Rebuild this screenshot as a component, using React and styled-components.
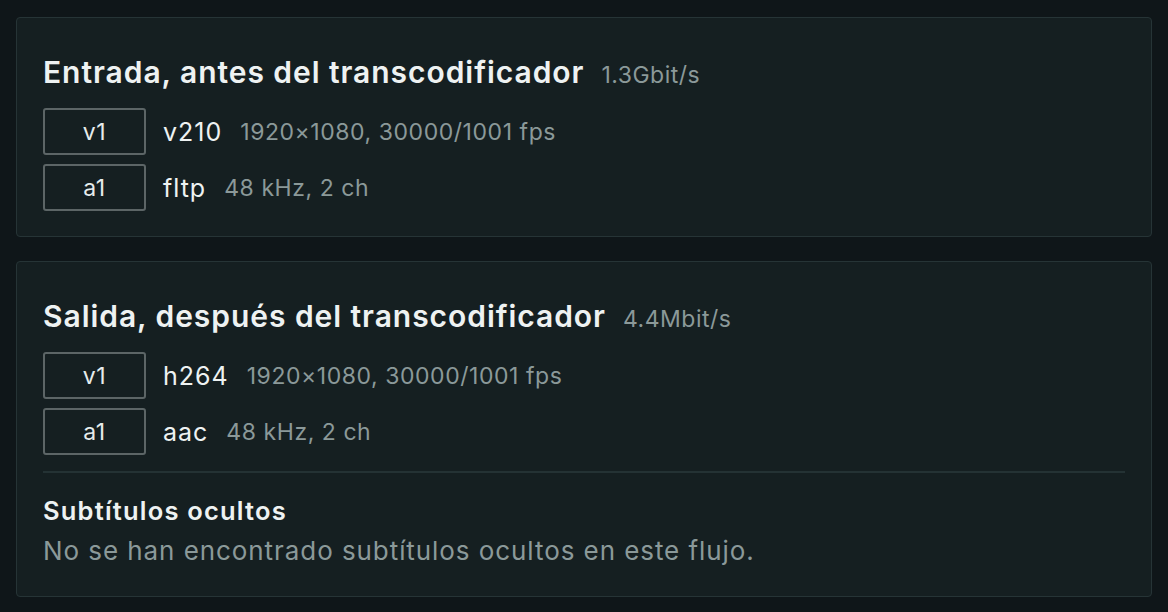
import styled, { createGlobalStyle } from 'styled-components'

const GlobalStyle = createGlobalStyle`
  html, body {
    margin: 0;
    padding: 0;
    background: #0f1619;
  }
  body {
    font-family: Inter, 'Noto Sans', sans-serif;
    color: #e6ecec;
  }
`;

const Page = styled.div`
  width: 1168px;
  height: 612px;
  box-sizing: border-box;
  padding: 17px 16px 0 16px;
  display: flex;
  flex-direction: column;
  gap: 24px;
`;

const Card = styled.section`
  background: #151f21;
  border: 1px solid #263436;
  border-radius: 4px;
  padding: 36px 26px ${props => props.$bottom || 25}px 26px;
  display: flex;
  flex-direction: column;
`;

const Header = styled.div`
  display: flex;
  align-items: baseline;
  gap: 17px;
  margin-bottom: 18px;
`;

const Title = styled.h2`
  margin: 0;
  font-size: 30px;
  font-weight: 600;
  line-height: 36px;
  letter-spacing: 0.95px;
  color: #eef2f2;
`;

const Rate = styled.span`
  font-size: 23px;
  letter-spacing: 0.5px;
  color: #8b9999;
`;

const StreamList = styled.div`
  display: flex;
  flex-direction: column;
  gap: 9px;
`;

const Stream = styled.div`
  display: flex;
  align-items: center;
  height: 47px;
`;

const Badge = styled.div`
  width: 103px;
  height: 47px;
  box-sizing: border-box;
  border: 2px solid #5c6566;
  border-radius: 3px;
  display: flex;
  align-items: center;
  justify-content: center;
  font-size: 23px;
  letter-spacing: 0.5px;
  color: #e6ecec;
  margin-right: 17px;
`;

const Codec = styled.span`
  font-size: 25px;
  letter-spacing: 1px;
  color: #eef2f2;
  margin-right: 18px;
`;

const Details = styled.span`
  font-size: 23px;
  letter-spacing: 0.55px;
  color: #8b9999;
`;

const Divider = styled.hr`
  border: 0;
  border-top: 2px solid #243234;
  margin: 16px 0 22px 0;
`;

const SubTitle = styled.h3`
  margin: 0;
  font-size: 25.5px;
  font-weight: 600;
  line-height: 32px;
  letter-spacing: 1.2px;
  color: #eef2f2;
`;

const Note = styled.p`
  margin: 8px 0 0 0;
  font-size: 26px;
  line-height: 32px;
  letter-spacing: 0.93px;
  color: #8b9999;
`;

const StreamRow = ({ id, codec, details }) => (
  <Stream>
    <Badge>{id}</Badge>
    <Codec>{codec}</Codec>
    <Details>{details}</Details>
  </Stream>
);

const App = () => (
  <>
    <GlobalStyle />
    <Page>
      <Card>
        <Header>
          <Title>Entrada, antes del transcodificador</Title>
          <Rate>1.3Gbit/s</Rate>
        </Header>
        <StreamList>
          <StreamRow id="v1" codec="v210" details="1920×1080, 30000/1001 fps" />
          <StreamRow id="a1" codec="fltp" details="48 kHz, 2 ch" />
        </StreamList>
      </Card>
      <Card $bottom={29}>
        <Header>
          <Title>Salida, después del transcodificador</Title>
          <Rate>4.4Mbit/s</Rate>
        </Header>
        <StreamList>
          <StreamRow id="v1" codec="h264" details="1920×1080, 30000/1001 fps" />
          <StreamRow id="a1" codec="aac" details="48 kHz, 2 ch" />
        </StreamList>
        <Divider />
        <SubTitle>Subtítulos ocultos</SubTitle>
        <Note>No se han encontrado subtítulos ocultos en este flujo.</Note>
      </Card>
    </Page>
  </>
);

export default App;
